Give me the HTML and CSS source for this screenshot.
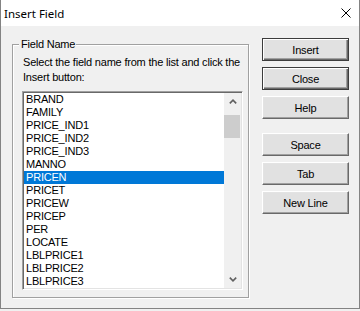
FILE: index.html
```html
<!DOCTYPE html>
<html lang="en">
<head>
    <meta charset="UTF-8">
    <meta name="viewport" content="width=device-width, initial-scale=1.0">
    <title>Insert Field</title>
    <link rel="stylesheet" href="styles.css">
</head>
<body>
    <div class="window">
        <div class="titlebar">
            <span class="title">Insert Field</span>
            <svg class="close" width="10" height="10" viewBox="0 0 10 10">
                <path d="M0.5 0.5 L9.5 9.5 M9.5 0.5 L0.5 9.5" stroke="#000" stroke-width="1" fill="none"/>
            </svg>
        </div>

        <div class="content">
            <div class="group">
                <span class="group-label">Field Name</span>
                <p class="hint">Select the field name from the list and click the<br>Insert button:</p>

                <div class="listbox">
                    <ul class="items">
                        <li>BRAND</li>
                        <li>FAMILY</li>
                        <li>PRICE_IND1</li>
                        <li>PRICE_IND2</li>
                        <li>PRICE_IND3</li>
                        <li>MANNO</li>
                        <li class="selected">PRICEN</li>
                        <li>PRICET</li>
                        <li>PRICEW</li>
                        <li>PRICEP</li>
                        <li>PER</li>
                        <li>LOCATE</li>
                        <li>LBLPRICE1</li>
                        <li>LBLPRICE2</li>
                        <li>LBLPRICE3</li>
                    </ul>
                    <div class="scrollbar">
                        <span class="arrow">
                            <svg width="8" height="5" viewBox="0 0 8 5"><polyline points="0.8,4.4 4,1.2 7.2,4.4" fill="none" stroke="#606060" stroke-width="1.6"/></svg>
                        </span>
                        <span class="thumb"></span>
                        <span class="track"></span>
                        <span class="arrow">
                            <svg width="8" height="5" viewBox="0 0 8 5"><polyline points="0.8,0.6 4,3.8 7.2,0.6" fill="none" stroke="#606060" stroke-width="1.6"/></svg>
                        </span>
                    </div>
                </div>
            </div>

            <div class="buttons">
                <button class="btn default">Insert</button>
                <button class="btn default">Close</button>
                <button class="btn">Help</button>
                <button class="btn spaced">Space</button>
                <button class="btn">Tab</button>
                <button class="btn">New Line</button>
            </div>
        </div>
    </div>
</body>
</html>
```

FILE: styles.css
```css
body {
    margin: 0;
    padding: 0;
    background-color: #f0f0f0;
    font-family: 'Liberation Sans', Arial, sans-serif;
    font-size: 11px;
    letter-spacing: -0.2px;
    color: #000;
}

.window {
    width: 360px;
    height: 309px;
    box-sizing: border-box;
    border: 1px solid #838383;
    border-top: none;
    background-color: #f0f0f0;
}

.titlebar {
    height: 26px;
    background: #ffffff;
    display: flex;
    align-items: center;
    justify-content: space-between;
    padding: 0 8px 0 3px;
    box-sizing: border-box;
}

.title {
    font-family: 'Noto Sans', 'Liberation Sans', sans-serif;
    font-size: 11.5px;
    letter-spacing: 0;
}

.close {
    display: block;
    margin-top: -1px;
}

.content {
    display: flex;
    align-items: flex-start;
    padding: 12px 10px 0 11px;
}

.group {
    position: relative;
    width: 237px;
    margin-top: 6px;
    padding: 10px 5px 7px 9px;
    box-sizing: border-box;
    border: 1px solid #a0a0a0;
    box-shadow: inset 1px 1px #ffffff, 1px 1px #ffffff;
}

.group-label {
    position: absolute;
    top: -7px;
    left: 6px;
    padding: 0 1px 0 2px;
    line-height: 13px;
    background-color: #f0f0f0;
}

.hint {
    margin: 0 0 6px 1px;
    line-height: 15px;
    white-space: nowrap;
}

.listbox {
    display: flex;
    height: 199px;
    padding: 1px;
    box-sizing: border-box;
    background: #ffffff;
    border: 1px solid;
    border-color: #a0a0a0 #ffffff #ffffff #a0a0a0;
    box-shadow: inset 1px 1px #696969, inset -1px -1px #e3e3e3;
}

.items {
    flex: 1;
    list-style: none;
    margin: 0;
    padding: 0;
    background: #ffffff;
}

.items li {
    height: 13px;
    line-height: 13px;
    padding-left: 2px;
    white-space: nowrap;
}

.items li.selected {
    background-color: #0078d7;
    color: #ffffff;
}

.scrollbar {
    width: 17px;
    display: flex;
    flex-direction: column;
    background-color: #f0f0f0;
}

.arrow {
    height: 17px;
    display: flex;
    align-items: center;
    justify-content: center;
}

.arrow svg {
    display: block;
}

.thumb {
    height: 23px;
    margin: 5px 1px 0 0;
    background-color: #cdcdcd;
}

.track {
    flex: 1;
}

.buttons {
    display: flex;
    flex-direction: column;
    gap: 6px;
    margin-left: 13px;
}

.btn {
    width: 87px;
    height: 23px;
    padding: 0;
    font-family: inherit;
    font-size: 11px;
    letter-spacing: -0.2px;
    color: #000;
    background-color: #e1e1e1;
    border: 1px solid;
    border-color: #ffffff #696969 #696969 #ffffff;
    box-shadow: inset -1px -1px #a0a0a0, inset 1px 1px #e3e3e3;
}

.btn.default {
    border-color: #3c3c3c;
    box-shadow: inset 1px 1px #ffffff, inset -1px -1px #696969, inset -2px -2px #a0a0a0;
}

.btn.spaced {
    margin-top: 8px;
}
```
